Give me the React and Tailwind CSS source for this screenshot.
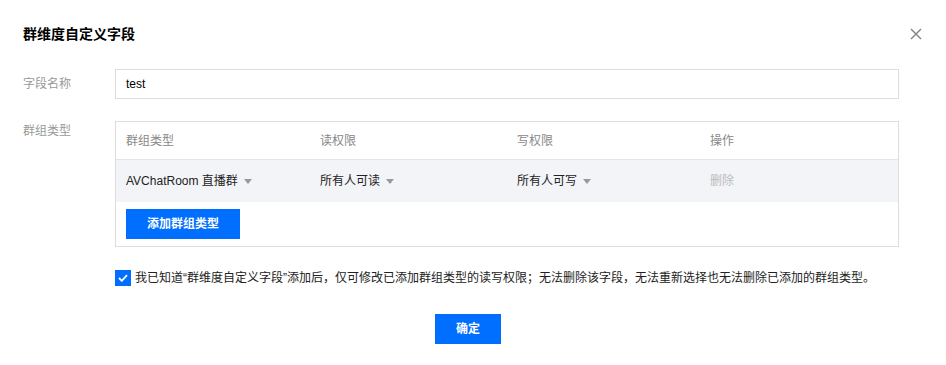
import React from 'react';

const font = { fontFamily: '"Liberation Sans", "Noto Sans CJK SC", sans-serif' };

const Caret = () => (
  <svg width="8" height="5" viewBox="0 0 8 5" className="ml-[6px] shrink-0">
    <path d="M0 0h8L4 5z" fill="#999" />
  </svg>
);

const Select = ({ children }) => (
  <div className="flex items-center text-[12px] text-[#222]">
    <span>{children}</span>
    <Caret />
  </div>
);

const App = () => {
  return (
    <div className="w-[946px] h-[365px] bg-white pl-[23px] pt-[24px]" style={font}>
      <div className="flex items-center justify-between pr-[24px]">
        <h1 className="text-[14px] font-bold leading-[20px] text-black">群维度自定义字段</h1>
        <button className="w-[12px] h-[12px] flex items-center justify-center">
          <svg width="12" height="12" viewBox="0 0 12 12">
            <path d="M1 1l10 10M11 1L1 11" stroke="#888" strokeWidth="1.5" />
          </svg>
        </button>
      </div>

      <div className="flex items-center mt-[25px]">
        <label className="w-[92px] text-[12px] text-[#999]">字段名称</label>
        <div className="w-[784px] h-[30px] border border-[#ddd] flex items-center pl-[10px] text-[12px] text-black">
          test
        </div>
      </div>

      <div className="flex items-start mt-[22px]">
        <label className="w-[92px] text-[12px] leading-[18px] pt-[1px] text-[#999]">群组类型</label>
        <div className="w-[784px] border border-[#ddd]">
          <div className="grid grid-cols-[194px_197px_193px_1fr] h-[38px] items-center border-b border-[#e5e5e5] pl-[10px] text-[12px] text-[#888]">
            <span>群组类型</span>
            <span>读权限</span>
            <span>写权限</span>
            <span>操作</span>
          </div>
          <div className="grid grid-cols-[194px_197px_193px_1fr] h-[42px] items-center bg-[#f3f4f7] pl-[10px]">
            <Select>AVChatRoom 直播群</Select>
            <Select>所有人可读</Select>
            <Select>所有人可写</Select>
            <span className="text-[12px] text-[#bbb]">删除</span>
          </div>
          <div className="pl-[10px] pt-[7px] pb-[7px]">
            <button className="w-[114px] h-[30px] bg-[#006eff] text-white text-[12px] font-bold">添加群组类型</button>
          </div>
        </div>
      </div>

      <div className="flex items-center mt-[22px] ml-[92px]">
        <span className="w-[16px] h-[16px] bg-[#006eff] flex items-center justify-center">
          <svg width="10" height="8" viewBox="0 0 10 8">
            <path d="M1 4l2.8 2.8L9 1.2" stroke="#fff" strokeWidth="1.8" fill="none" />
          </svg>
        </span>
        <span className="ml-[4px] text-[12px] text-[#222]">
          我已知道“群维度自定义字段”添加后，仅可修改已添加群组类型的读写权限；无法删除该字段，无法重新选择也无法删除已添加的群组类型。
        </span>
      </div>

      <div className="flex justify-center mt-[27px] pr-[33px]">
        <button className="w-[66px] h-[30px] bg-[#006eff] text-white text-[12px] font-bold">确定</button>
      </div>
    </div>
  );
};

export default App;
